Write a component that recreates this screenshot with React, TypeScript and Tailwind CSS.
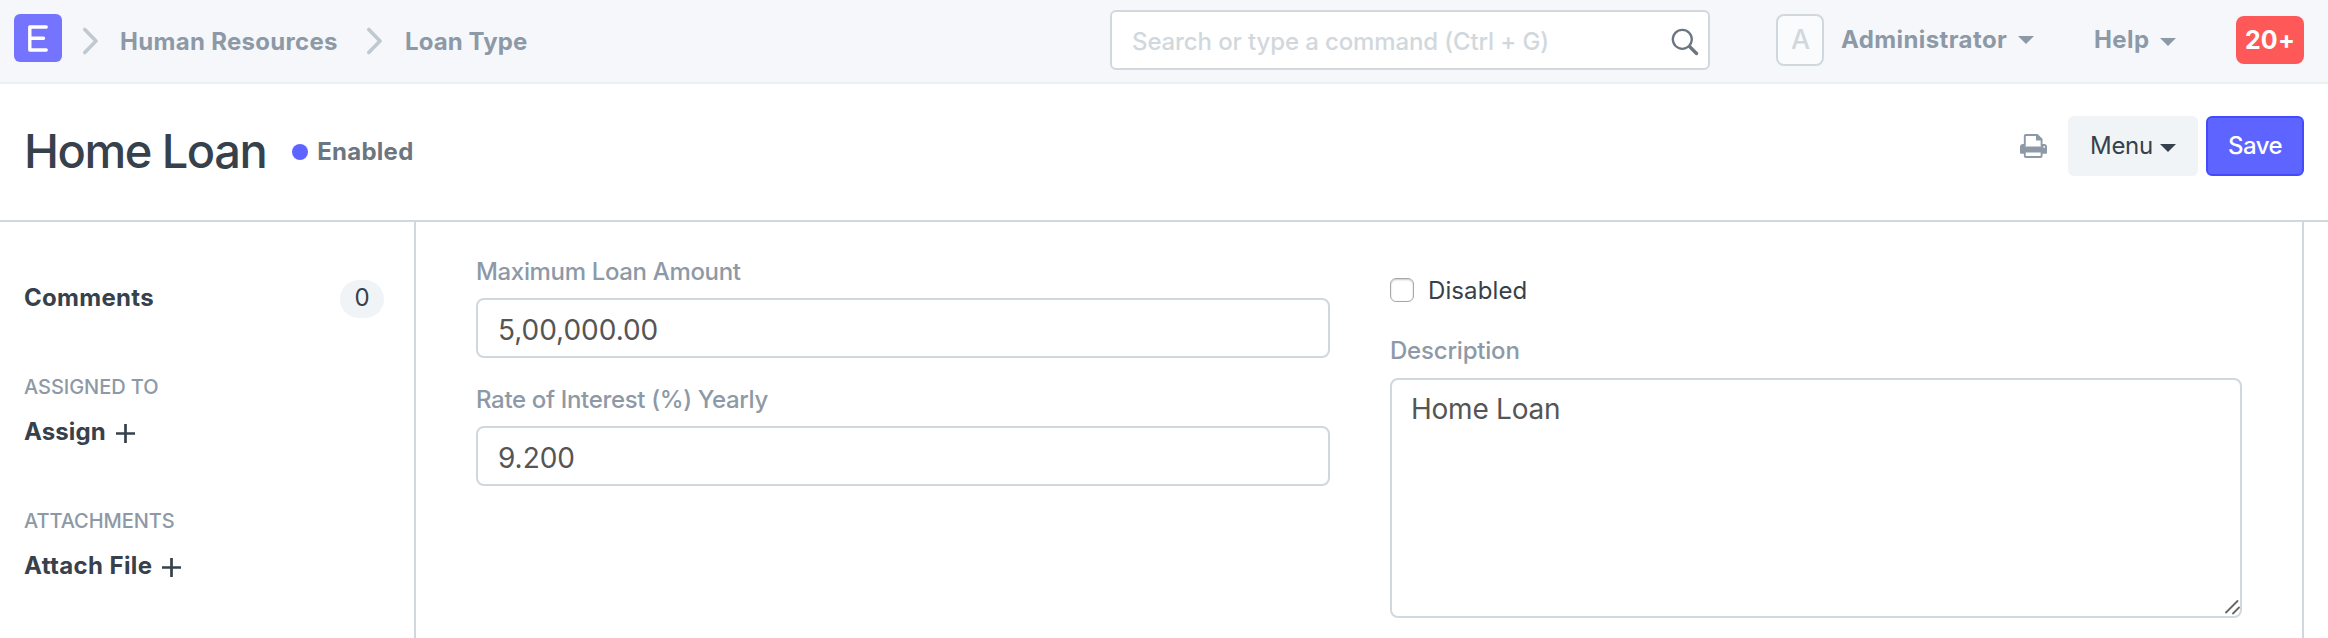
function Chevron({ className }: { className: string }) {
  return (
    <svg className={className} width="17" height="28" viewBox="0 0 17 28" fill="none" stroke="#c0c9d2" strokeWidth="3.6" strokeLinecap="round" strokeLinejoin="round">
      <path d="M2.8 2.5 14 14 2.8 25.5" />
    </svg>
  );
}

function Caret({ className }: { className: string }) {
  return (
    <svg className={className} width="16" height="8" viewBox="0 0 16 8" fill="currentColor">
      <path d="M0 0H16L8 8Z" />
    </svg>
  );
}

function Plus({ className }: { className: string }) {
  return (
    <svg className={className} width="19" height="19" viewBox="0 0 19 19" stroke="#36414c" strokeWidth="2.7">
      <path d="M0 9.5H19M9.5 0V19" />
    </svg>
  );
}

function Printer() {
  return (
    <svg className="mt-[18px] shrink-0" width="27" height="24" viewBox="0 0 27 24">
      <path d="M3 10H24Q27 10 27 13V18.5Q27 19.8 25.8 19.8H1.2Q0 19.8 0 18.5V13Q0 10 3 10Z" fill="#8d99a6" />
      <path d="M4.8 12.5V1.8Q4.8 1 5.8 1H17.2L21.6 5.4V12.5Z" fill="#fff" />
      <path d="M4.8 12.5V1.8Q4.8 1 5.8 1H17.2L21.6 5.4V12.5" fill="none" stroke="#8d99a6" strokeWidth="1.9" />
      <path d="M16 1V6.6H22V5L18 1Z" fill="#8d99a6" />
      <path d="M4.8 17.6V22.2Q4.8 23 5.8 23H20.6Q21.6 23 21.6 22.2V17.6Z" fill="#fff" stroke="#8d99a6" strokeWidth="1.9" />
      <circle cx="24.2" cy="12.9" r="0.9" fill="#fff" />
    </svg>
  );
}

function Navbar() {
  return (
    <header className="flex h-[84px] shrink-0 items-start border-b-2 border-[#ebeff2] bg-[#f5f7fa] font-bold leading-8 text-[#8d99a6]">
      <div className="ml-[14px] mt-[14px] flex size-12 shrink-0 items-center justify-center rounded-md bg-[#7574ff]">
        <svg width="20" height="27" viewBox="0 0 20 27" fill="none" stroke="#fff" strokeWidth="3.4" strokeLinecap="round" strokeLinejoin="round">
          <path d="M18.2 2H1.8V25H18.2M1.8 13.2H15.5" />
        </svg>
      </div>
      <Chevron className="ml-[20px] mt-[27px] shrink-0" />
      <a className="ml-[21px] mt-[26px] w-[246px] shrink-0 whitespace-nowrap tracking-[0.3px]">Human Resources</a>
      <Chevron className="mt-[27px] shrink-0" />
      <a className="ml-[22px] mt-[26px] w-[705px] shrink-0 whitespace-nowrap tracking-[0.1px]">Loan Type</a>
      <div className="mt-[10px] flex h-[60px] w-[600px] shrink-0 items-center justify-between rounded-md border-2 border-[#d1d8dd] bg-white pl-5 pr-[9px] font-medium text-[#d1d8dd]">
        <span className="mt-[3px] whitespace-nowrap tracking-[-0.12px]">Search or type a command (Ctrl + G)</span>
        <svg className="mt-1" width="28" height="28" viewBox="0 0 28 28" fill="none" stroke="#6c7680" strokeLinecap="round">
          <circle cx="11.3" cy="11.3" r="9.5" strokeWidth="2.3" />
          <path d="M18.5 18.5 25.5 25.5" strokeWidth="3.4" />
        </svg>
      </div>
      <div className="ml-[66px] mt-[14px] flex h-[52px] w-12 shrink-0 items-center justify-center rounded-lg border-2 border-[#d1d8dd] bg-[#fafbfc] text-[27px] font-medium text-[#d1d8dd]">
        <span className="pl-px">A</span>
      </div>
      <span className="ml-[17px] mt-6 w-[177px] shrink-0 whitespace-nowrap tracking-[0.4px]">Administrator</span>
      <Caret className="mt-[36px] shrink-0" />
      <span className="ml-[60px] mt-6 w-[66px] shrink-0 whitespace-nowrap tracking-[0.4px]">Help</span>
      <Caret className="mt-[38px] shrink-0" />
      <div className="ml-[60px] mt-4 flex h-12 w-[68px] shrink-0 items-center justify-center rounded-lg bg-[#ff5858] text-[25px] tracking-[0.2px] text-white">
        20+
      </div>
    </header>
  );
}

function PageHead() {
  return (
    <section className="flex h-[138px] shrink-0 items-start border-b-2 border-[#d1d8dd] pl-6 pr-6">
      <h1 className="mt-[37px] whitespace-nowrap text-[47px] font-medium leading-[60px] tracking-[-1.5px] text-[#36414c]">Home Loan</h1>
      <div className="ml-[26px] mt-[52px] flex items-center text-[#6c7680]">
        <span className="size-4 rounded-full bg-[#5e64ff]" />
        <span className="ml-[9px] font-bold leading-8 tracking-[0.27px]">Enabled</span>
      </div>
      <div className="ml-auto mt-8 flex items-start">
        <Printer />
        <button className="ml-[21px] flex h-[60px] w-[130px] items-center rounded-md bg-[#f0f4f7] pl-[22px] text-[#36414c]">
          <span className="w-[70px] text-left tracking-[-0.28px]">Menu</span>
          <Caret className="mt-1" />
        </button>
        <button className="ml-2 h-[60px] w-[98px] rounded-md border-2 border-[#444bff] bg-[#5e64ff] font-medium tracking-[-0.6px] text-white">
          Save
        </button>
      </div>
    </section>
  );
}

function SidebarSection({ title, action, spacing }: { title: string; action: string; spacing: string }) {
  return (
    <div className="mb-[58px]">
      <h2 className="text-xl font-medium leading-[30px] tracking-[-0.05px] text-[#8d99a6]">{title}</h2>
      <div className="mt-[14px] flex h-8 items-center">
        <a className={`whitespace-nowrap font-bold text-[#36414c] ${spacing}`}>{action}</a>
        <Plus className="ml-[10px] mt-[2px]" />
      </div>
    </div>
  );
}

function Sidebar() {
  return (
    <aside className="w-[416px] shrink-0 border-r-2 border-[#d1d8dd] pl-6 pr-[30px]">
      <div className="mb-[54px] mt-[58px] flex h-[38px] items-start justify-between text-[#36414c]">
        <a className="font-bold leading-[36px] tracking-[0.3px]">Comments</a>
        <span className="h-[38px] w-11 rounded-full bg-[#f0f4f7] text-center leading-[36px]">0</span>
      </div>
      <SidebarSection title="ASSIGNED TO" action="Assign" spacing="tracking-[0.1px]" />
      <SidebarSection title="ATTACHMENTS" action="Attach File" spacing="tracking-[0.38px]" />
    </aside>
  );
}

function Field({ label, value }: { label: string; value: string }) {
  return (
    <div className="mb-[8px] h-[120px]">
      <label className="block h-[52px] pt-[10px] font-medium leading-8 tracking-[-0.34px] text-[#8d99a6]">{label}</label>
      <div className="flex h-[60px] items-center rounded-lg border-2 border-[#d1d8dd] pl-[20px] pt-[4px] text-[28px] tracking-[-0.03px] text-[#555]">
        {value}
      </div>
    </div>
  );
}

function LoanForm() {
  return (
    <main className="flex w-[1888px] shrink-0 items-start gap-[60px] border-r-2 border-[#d1d8dd] pl-[60px] pr-[60px] pt-6">
      <div className="w-[854px] shrink-0">
        <Field label="Maximum Loan Amount" value="5,00,000.00" />
        <Field label="Rate of Interest (%) Yearly" value="9.200" />
      </div>
      <div className="w-[852px] shrink-0">
        <div className="mt-[29px] flex h-8 items-center text-[#36414c]">
          <span className="-mt-[2px] size-6 rounded-md border border-[#a6a6a6] bg-white shadow-[inset_0_1px_2px_#c8c8c8]" />
          <span className="ml-[14px] tracking-[0.1px]">Disabled</span>
        </div>
        <label className="mt-7 block h-[43px] font-medium leading-8 tracking-[-0.2px] text-[#8d99a6]">Description</label>
        <div className="flex h-[240px] rounded-lg border-2 border-[#d1d8dd] pl-[19px] pt-[9px] text-[28px] leading-10 tracking-[-0.24px] text-[#555]">
          <span>Home Loan</span>
          <svg className="ml-auto self-end" width="16" height="16" viewBox="0 0 16 16" stroke="#666" strokeWidth="1.8" strokeLinecap="round">
            <path d="M2 12.5 13.5 1M9 13.5 15 7.5" />
          </svg>
        </div>
      </div>
    </main>
  );
}

export default function App() {
  return (
    <div className="flex h-[638px] w-[2328px] flex-col overflow-hidden bg-white font-['Inter',sans-serif] text-[24px] font-normal">
      <Navbar />
      <PageHead />
      <div className="flex min-h-0 flex-1">
        <Sidebar />
        <LoanForm />
      </div>
    </div>
  );
}
